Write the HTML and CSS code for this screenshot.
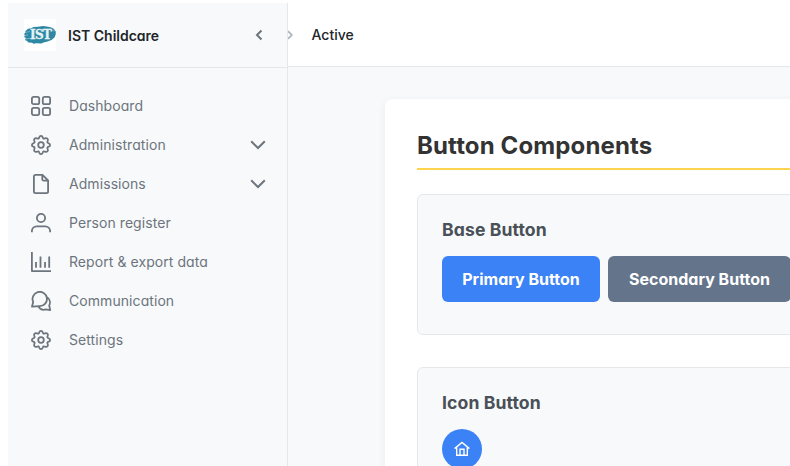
FILE: index.html
```html
<!DOCTYPE html>
<html lang="en">
<head>
<meta charset="utf-8">
<title>IST Childcare</title>
<link rel="stylesheet" href="styles.css">
</head>
<body>
<svg class="defs" width="0" height="0">
  <symbol id="gear" viewBox="0 0 20 20"><path d="M8.300 2.300Q8.700.9 10 .9T11.700 2.300Q12.200 4.400 14 3.300Q15.400 2.700 16.400 3.600Q17.300 4.600 16.700 6Q15.600 7.800 17.700 8.300Q19.100 8.700 19.100 10Q19.100 11.300 17.700 11.700Q15.600 12.200 16.700 14Q17.300 15.400 16.400 16.400Q15.400 17.300 14 16.700Q12.200 15.600 11.700 17.700Q11.300 19.100 10 19.100Q8.700 19.100 8.300 17.700Q7.800 15.600 6 16.700Q4.600 17.300 3.600 16.400Q2.700 15.400 3.300 14Q4.400 12.200 2.300 11.700Q.9 11.300 .9 10Q.9 8.700 2.300 8.300Q4.400 7.800 3.300 6Q2.700 4.600 3.600 3.600Q4.600 2.700 6 3.300Q7.800 4.400 8.300 2.300Z"/><circle cx="10" cy="10" r="2.800"/></symbol>
  <symbol id="down" viewBox="0 0 16 10"><path d="M1.200 1.300 8 8l6.800-6.700"/></symbol>
</svg>
<div class="app">
  <aside class="sidebar">
    <div class="brand">
      <svg class="logo" viewBox="0 0 32 32"><path class="paint" d="M1.500 12 4 9.800l3-.5L9.500 8l4.500-.3 5-.7 4 .4 4.500 1 2.500 1.700 1.800 2.300-.1 3-1.200 3.200-3 2.500-4 1.500-4 .9-2 .9-5-.2-3 .5-1.500-.9-3.500-.4L3 22l-2-1 1-2-2-1 1-1.500-1-1.500 1-1z"/><path class="streak" d="M1 13.500l5-1M0 16.500l4-.5M2 20l4-.8M27 11l4 1"/><text x="16.500" y="19.900" text-anchor="middle">IST</text></svg>
      <span class="name">IST Childcare</span>
      <svg class="collapse" viewBox="0 0 8 12"><path d="M6.500 1.500 2 6l4.500 4.500"/></svg>
    </div>
    <nav class="menu">
      <a class="item"><svg class="icon" viewBox="0 0 20 20"><rect x=".9" y=".9" width="7.300" height="7.300" rx="1.800"/><rect x="11.800" y=".9" width="7.300" height="7.300" rx="1.800"/><rect x=".9" y="11.800" width="7.300" height="7.300" rx="1.800"/><rect x="11.800" y="11.800" width="7.300" height="7.300" rx="1.800"/></svg><span>Dashboard</span></a>
      <a class="item"><svg class="icon"><use href="#gear"/></svg><span>Administration</span><svg class="down"><use href="#down"/></svg></a>
      <a class="item"><svg class="icon" viewBox="0 0 20 20"><path d="M4.500.9h7l5.600 5.600v11a1.600 1.600 0 0 1-1.600 1.600h-11a1.600 1.600 0 0 1-1.600-1.600v-15A1.600 1.600 0 0 1 4.500.9zM11.300 1v4.200a1.400 1.400 0 0 0 1.400 1.400H17"/></svg><span>Admissions</span><svg class="down"><use href="#down"/></svg></a>
      <a class="item"><svg class="icon" viewBox="0 0 20 20"><circle cx="10" cy="5" r="4.100"/><path d="M.9 19.200v-1.400a4.800 4.800 0 0 1 4.800-4.500h8.600a4.800 4.800 0 0 1 4.800 4.500v1.400"/></svg><span>Person register</span></a>
      <a class="item"><svg class="icon" viewBox="0 0 20 20"><path d="M.9 0v19.100H20M5 10v5.800M9.500 4.500v11.300M14 10v5.800M18.200 4.500v11.300"/></svg><span>Report &amp; export data</span></a>
      <a class="item"><svg class="icon" viewBox="0 0 20 20"><path d="M1 15.600 2.200 11A7.200 7.200 0 1 1 8.800 15.200zM16 6.300c2.800 1.700 3.700 5.200 2.200 8.300l1 4.500-4.500-.7c-3 1-5.700-.1-7.300-3.100"/></svg><span>Communication</span></a>
      <a class="item"><svg class="icon"><use href="#gear"/></svg><span>Settings</span></a>
    </nav>
  </aside>
  <main class="main">
    <header class="topbar"><svg class="crumb" viewBox="0 0 5 10"><path d="M0 1.200 3.800 5 0 8.800"/></svg><span>Active</span></header>
    <section class="card">
      <h1>Button Components</h1>
      <div class="group">
        <h2>Base Button</h2>
        <div class="row"><button class="btn primary">Primary Button</button><button class="btn secondary">Secondary Button</button></div>
      </div>
      <div class="group">
        <h2>Icon Button</h2>
        <button class="round" aria-label="Home"><svg viewBox="0 0 16 16"><path d="M.6 7.600 8 1.400l7.400 6.200M2.700 6.200v8.100h10.600V6.200M6 14.300V8.200h4v6.100"/></svg></button>
      </div>
    </section>
  </main>
</div>
</body>
</html>
```
FILE: styles.css
```css
* { box-sizing: border-box; }
body { margin: 0; background: #fff; font-family: Inter, sans-serif; font-feature-settings: "cv11"; overflow: hidden; }
.defs { display: block; }
svg { fill: none; flex: none; }
.app { display: flex; width: 790px; height: 466px; padding: 3px 0 0 8px; overflow: hidden; }
.sidebar { width: 280px; flex: none; background: #f8f9fb; border-right: 1px solid #e5e8eb; }
.brand { height: 65px; display: flex; align-items: center; padding: 0 24px 0 16px; border-bottom: 1px solid #e5e8eb; }
.logo { width: 32px; height: 32px; background: #fff; }
.paint { fill: #2e88a4; }
.streak { stroke: #b8dbe5; stroke-width: .5; }
.logo text { font: bold 12px "DejaVu Serif", serif; fill: #e6f4f6; stroke: #e6f4f6; stroke-width: .3; letter-spacing: -.8px; }
.name { margin-left: 12px; font-size: 14px; font-weight: 600; color: #212529; }
.collapse { width: 8px; height: 12px; margin-left: auto; stroke: #6c757d; stroke-width: 2; }
.menu { padding-top: 18px; }
.item { height: 39px; display: flex; align-items: center; padding: 0 21px 0 23px; color: #6c757d; font-size: 14px; letter-spacing: .07px; }
.item span { margin-left: 18px; }
.icon { width: 20px; height: 20px; stroke: #6c757d; stroke-width: 1.800; stroke-linejoin: round; }
.down { width: 16px; height: 10px; margin-left: auto; stroke: #6c757d; stroke-width: 2; }
.main { flex: 1; min-width: 0; background: #f8f9fb; overflow: hidden; }
.topbar { height: 64px; display: flex; align-items: center; background: #fff; border-bottom: 1px solid #e5e8eb; color: #212529; font-size: 14px; font-weight: 500; }
.crumb { width: 5px; height: 10px; margin-right: 18.500px; stroke: #adb5bd; stroke-width: 1.700; }
.card { width: 800px; margin: 32px 0 0 97px; height: 600px; padding: 32px; background: #fff; border-radius: 8px; box-shadow: 0 2px 8px rgba(0,0,0,.06); }
h1 { margin: 0 0 24px; height: 39px; line-height: 29px; font-size: 24px; font-weight: 700; letter-spacing: .13px; color: #333; border-bottom: 2px solid #ffd54f; }
.group { height: 141px; margin-bottom: 32px; padding: 24px; border: 1px solid #e5e8eb; border-radius: 6px; background: #f8f9fb; }
h2 { margin: 0 0 16px; font-size: 17.600px; line-height: 21px; font-weight: 700; letter-spacing: .1px; color: #495057; }
.row { display: flex; gap: 8px; }
.btn { height: 46px; flex: none; border: 0; border-radius: 6px; padding: 0; color: #fff; font: 700 16px Inter, sans-serif; font-feature-settings: "cv11"; }
.primary { width: 158px; background: #3b82f6; }
.secondary { width: 183px; background: #64748b; }
.round { display: grid; place-items: center; width: 40px; height: 40px; padding: 0; border: 0; border-radius: 50%; background: #3b82f6; }
.round svg { width: 16px; height: 16px; stroke: #fff; stroke-width: 1.400; }
```
